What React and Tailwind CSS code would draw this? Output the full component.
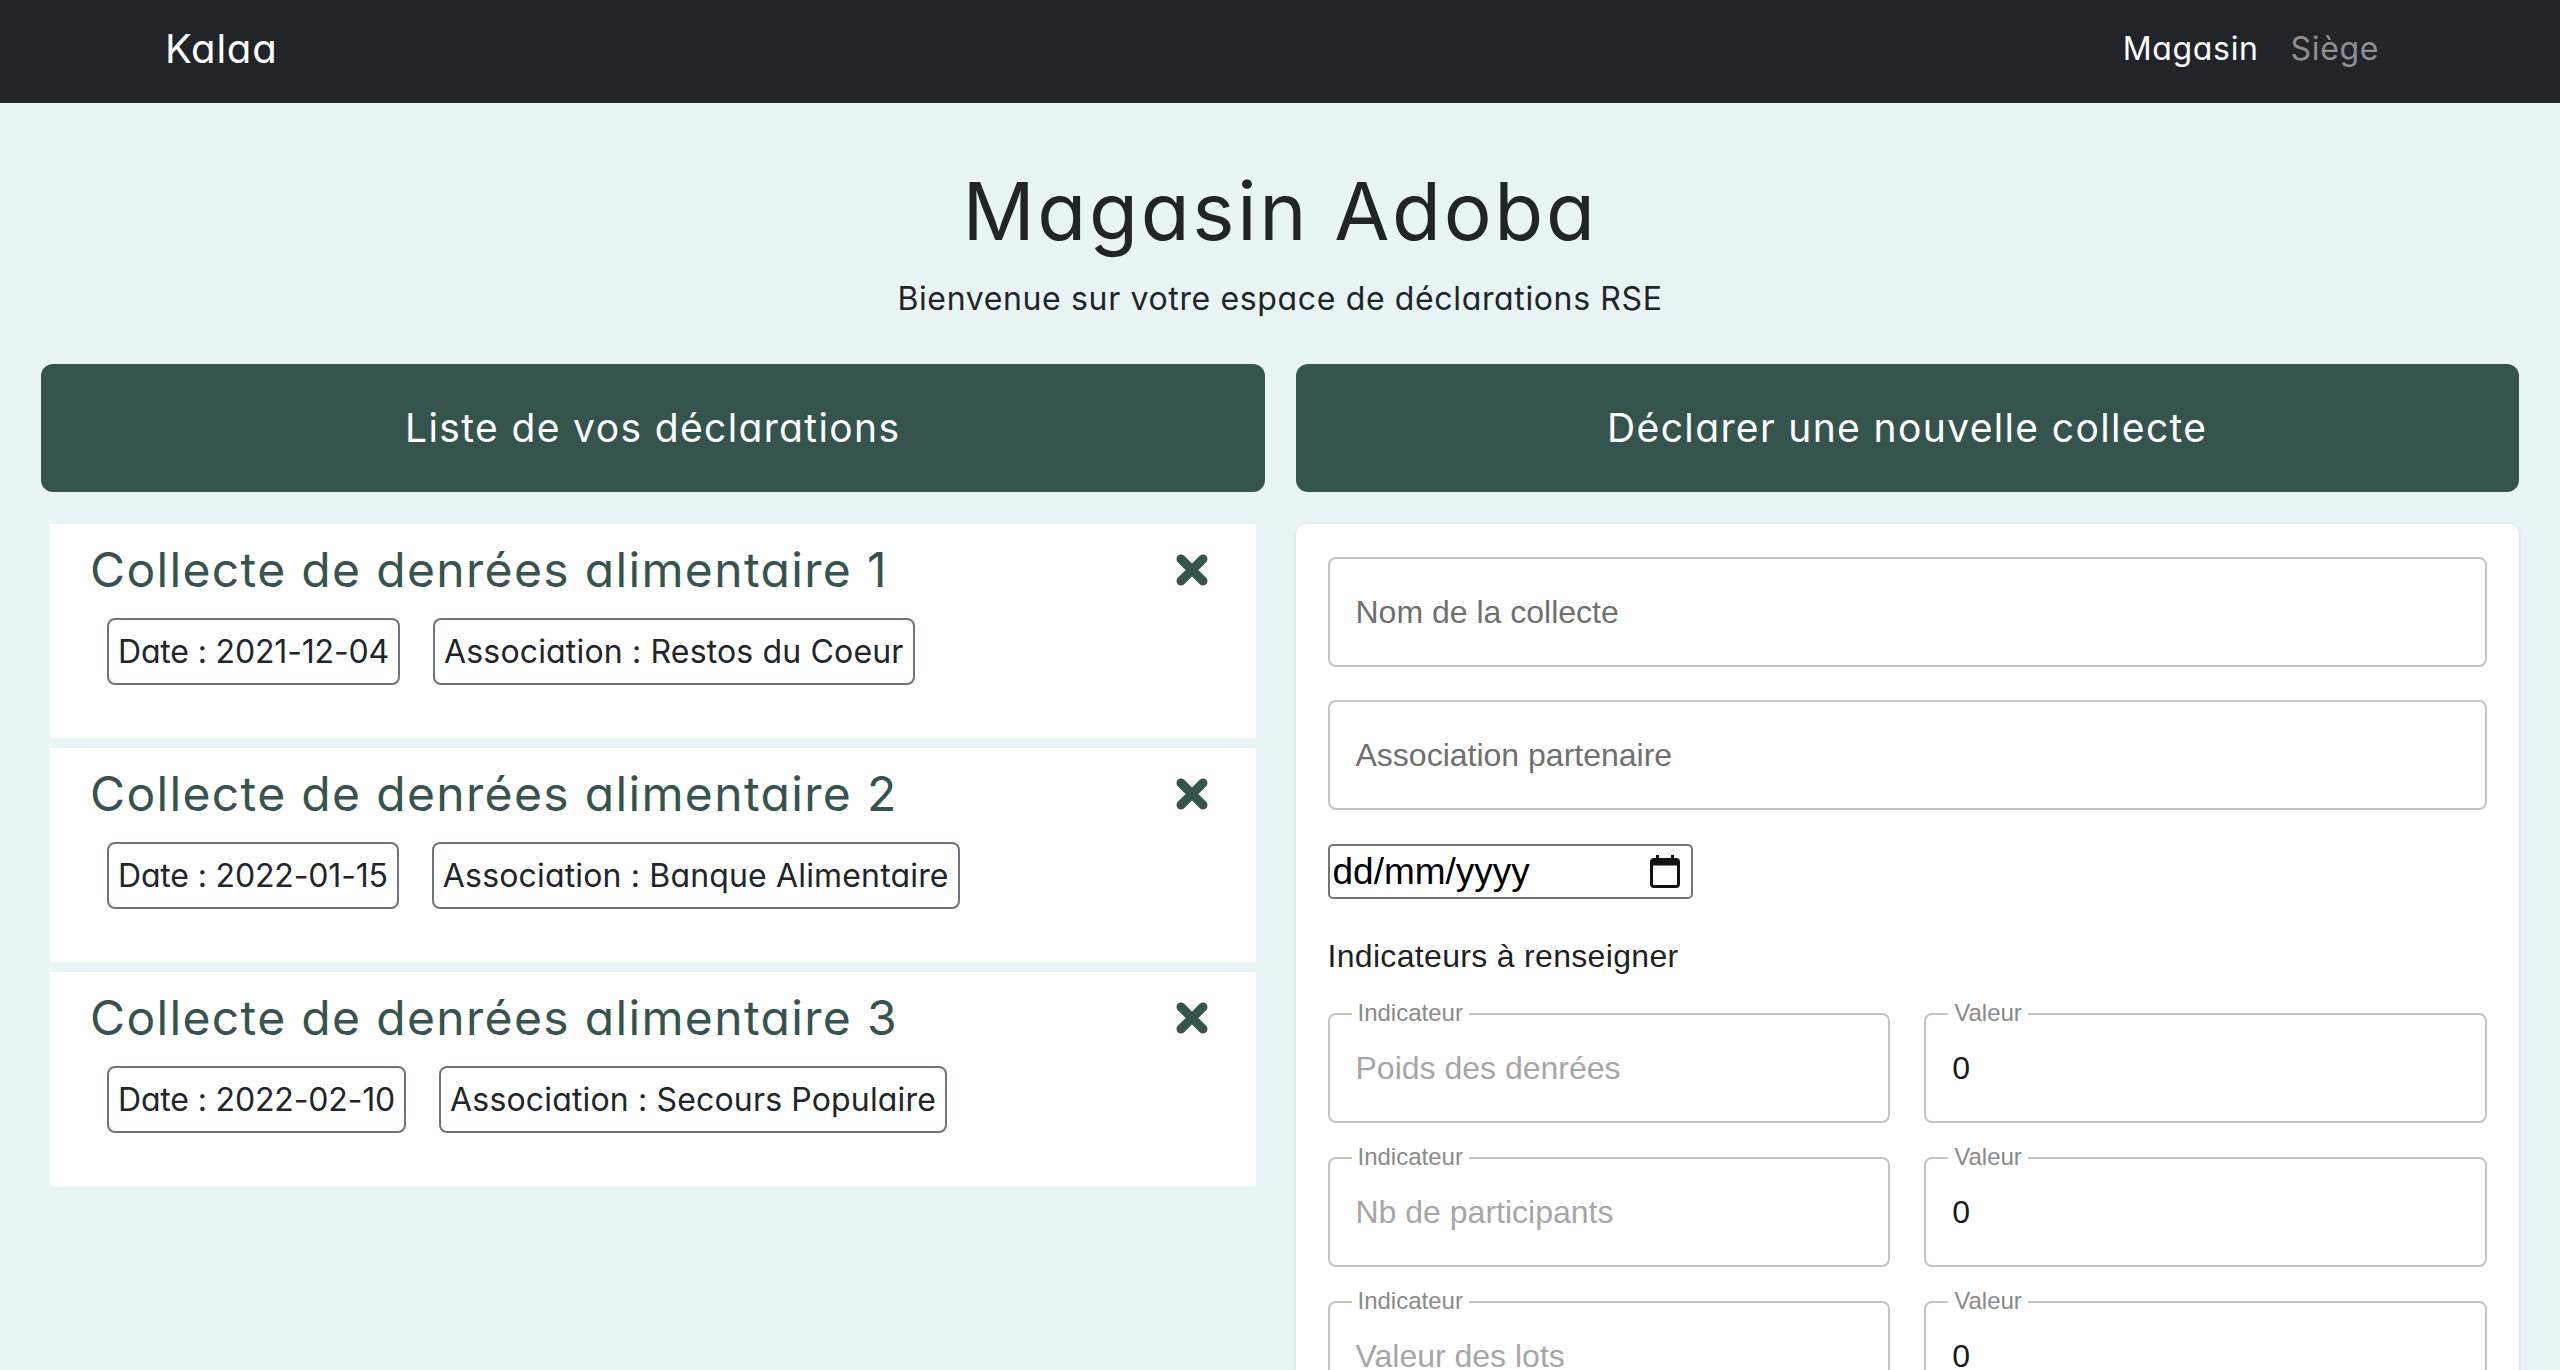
import React from 'react';

const collectes = [
    { title: 'Collecte de denrées alimentaire 1', date: '2021-12-04', asso: 'Restos du Coeur' },
    { title: 'Collecte de denrées alimentaire 2', date: '2022-01-15', asso: 'Banque Alimentaire' },
    { title: 'Collecte de denrées alimentaire 3', date: '2022-02-10', asso: 'Secours Populaire' },
];

const indicateurs = ['Poids des denrées', 'Nb de participants', 'Valeur des lots'];

const poppins = "font-['Inter',sans-serif] [font-feature-settings:'cv11']";
const helv = "font-['Liberation_Sans',Arial,sans-serif]";

const CloseIcon = () => (
    <svg width="34" height="34" viewBox="0 0 34 34" aria-hidden="true">
        <path d="M6 6 L28 28 M28 6 L6 28" stroke="#35544e" strokeWidth="9" strokeLinecap="round" />
    </svg>
);

const CalendarIcon = () => (
    <svg width="30" height="33" viewBox="0 0 30 33" aria-hidden="true">
        <rect x="6" y="0" width="3" height="6" fill="#111" />
        <rect x="21" y="0" width="3" height="6" fill="#111" />
        <rect x="1.5" y="4.5" width="27" height="27" rx="2.5" fill="none" stroke="#111" strokeWidth="3" />
        <rect x="1.5" y="4.5" width="27" height="6" fill="#111" />
    </svg>
);

const OutlinedField = ({ label, children }) => (
    <div className="relative h-[110px] border-2 border-[#c4c4c4] rounded-[8px] flex items-center pl-[26px]">
        <span className={`absolute top-[-16px] left-[22px] px-[6px] bg-white text-[24px] leading-[28px] text-[#8a8a8a] ${helv}`}>
            {label}
        </span>
        {children}
    </div>
);

export default function App() {
    return (
        <div className="min-h-screen bg-[#e8f4f5]">
            {/* Navbar */}
            <nav className="h-[103px] bg-[#212529] flex items-center justify-between pl-[165px] pr-[165px] pb-[6px]">
                <span className={`text-white text-[40px] tracking-[0.02em] ${poppins}`}>Kalaa</span>
                <div className={`flex text-[32px] tracking-[0.02em] ${poppins}`}>
                    <a className="px-4 text-white">Magasin</a>
                    <a className="px-4 text-[#8e9092]">Siège</a>
                </div>
            </nav>

            {/* Heading */}
            <div className={`text-center text-[#212529] pt-[60px] ${poppins}`}>
                <h1 className="text-[80px] leading-[96px] mb-[16px] tracking-[0.033em]">Magasin Adoba</h1>
                <p className="text-[32px] leading-[48px] tracking-[0.02em]">Bienvenue sur votre espace de déclarations RSE</p>
            </div>

            <div className="grid grid-cols-2 gap-[31px] px-[41px] mt-[41px]">
                {/* Left column */}
                <div>
                    <div className={`h-[128px] rounded-[12px] bg-[#35544e] flex items-center justify-center text-white text-[39px] tracking-[0.035em] ${poppins}`}>
                        Liste de vos déclarations
                    </div>
                    <div className="mx-[9px] mt-[32px] flex flex-col gap-[10px]">
                        {collectes.map((c) => (
                            <div key={c.title} className={`h-[214px] bg-white pt-[17px] ${poppins}`}>
                                <div className="flex items-center justify-between pl-[40px] pr-[47px]">
                                    <h3 className="text-[48px] leading-[58px] text-[#35544e] tracking-[0.028em]">{c.title}</h3>
                                    <CloseIcon />
                                </div>
                                <div className="flex gap-[33px] pl-[57px] mt-[19px]">
                                    <span className="h-[67px] flex items-center px-[9px] border-2 border-[#6c757d] rounded-[8px] text-[32px] text-[#212529] tracking-[-0.005em]">
                                        Date : {c.date}
                                    </span>
                                    <span className="h-[67px] flex items-center px-[9px] border-2 border-[#6c757d] rounded-[8px] text-[32px] text-[#212529] tracking-[0.005em]">
                                        Association : {c.asso}
                                    </span>
                                </div>
                            </div>
                        ))}
                    </div>
                </div>

                {/* Right column */}
                <div>
                    <div className={`h-[128px] rounded-[12px] bg-[#35544e] flex items-center justify-center text-white text-[39px] tracking-[0.035em] ${poppins}`}>
                        Déclarer une nouvelle collecte
                    </div>
                    <div className={`mt-[32px] bg-white rounded-[10px] shadow-[0_1px_4px_rgba(0,0,0,0.12)] px-[32px] pt-[33px] pb-[40px] ${helv}`}>
                        <div className="h-[110px] border-2 border-[#c4c4c4] rounded-[8px] flex items-center pl-[26px] text-[32px] text-[#6f6f6f]">
                            Nom de la collecte
                        </div>
                        <div className="mt-[33px] h-[110px] border-2 border-[#c4c4c4] rounded-[8px] flex items-center pl-[26px] text-[32px] text-[#6f6f6f]">
                            Association partenaire
                        </div>
                        <div className="mt-[34px] w-[365px] h-[55px] border-2 border-[#767676] rounded-[5px] flex items-center justify-between pl-[3px] pr-[11px]">
                            <span className="text-[37px] leading-none text-black">dd/mm/yyyy</span>
                            <CalendarIcon />
                        </div>
                        <p className="mt-[33px] text-[32px] leading-[48px] text-[#1f1f1f] tracking-[0.01em]">Indicateurs à renseigner</p>
                        <div className="mt-[33px] flex flex-col gap-[34px]">
                            {indicateurs.map((ind) => (
                                <div key={ind} className="grid grid-cols-2 gap-[34px]">
                                    <OutlinedField label="Indicateur">
                                        <span className="text-[32px] text-[#a6a6a6]">{ind}</span>
                                    </OutlinedField>
                                    <OutlinedField label="Valeur">
                                        <span className="text-[32px] text-[#1a1a1a]">0</span>
                                    </OutlinedField>
                                </div>
                            ))}
                        </div>
                    </div>
                </div>
            </div>
        </div>
    );
}
